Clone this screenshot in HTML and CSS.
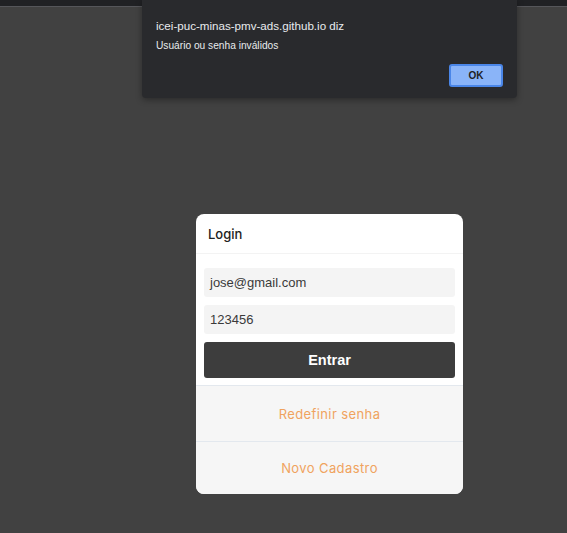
FILE: index.html
```html
<!DOCTYPE html>
<html lang="pt-BR">
<head>
<meta charset="utf-8">
<title>Login</title>
<link rel="stylesheet" href="styles.css">
</head>
<body>
<div class="topbar"></div>
<main class="stage">
  <section class="modal">
    <header class="modal-header">Login</header>
    <div class="modal-body">
      <div class="field">jose@gmail.com</div>
      <div class="field">123456</div>
      <button class="btn-enter">Entrar</button>
    </div>
    <div class="modal-footer">
      <a class="footer-link">Redefinir senha</a>
      <a class="footer-link">Novo Cadastro</a>
    </div>
  </section>
</main>
<div class="alert">
  <div class="alert-title">icei-puc-minas-pmv-ads.github.io diz</div>
  <div class="alert-msg">Usuário ou senha inválidos</div>
  <div class="alert-actions"><button class="alert-ok">OK</button></div>
</div>
</body>
</html>
```
FILE: styles.css
```css
* { box-sizing: border-box; }
html, body { margin: 0; padding: 0; }
body {
  background: #414141;
  width: 567px;
  height: 533px;
  overflow: hidden;
  font-family: "Liberation Sans", Arial, sans-serif;
  position: relative;
}
.topbar {
  height: 7px;
  background: #202124;
  border-bottom: 1px solid #55565a;
}
.stage {
  padding: 207px 0 0 196px;
}
.modal {
  width: 267px;
  height: 280px;
  background: #fff;
  border-radius: 8px;
  overflow: hidden;
  display: flex;
  flex-direction: column;
}
.modal-header {
  height: 40px;
  padding: 12px 12px 0;
  font-family: "Inter", "Lato", sans-serif;
  font-weight: 500;
  font-size: 13px;
  color: #222;
  border-bottom: 1px solid #f3f3f3;
}
.modal-body {
  padding: 14px 8px 7px;
  display: flex;
  flex-direction: column;
  gap: 8px;
}
.field {
  height: 29px;
  background: #f4f4f4;
  border-radius: 3px;
  padding: 0 6px;
  display: flex;
  align-items: center;
  font-size: 13px;
  color: #3a3a3a;
}
.btn-enter {
  height: 36px;
  background: #3d3d3d;
  border: none;
  border-radius: 3px;
  color: #fff;
  font-family: "Liberation Sans", Arial, sans-serif;
  font-size: 14.5px;
  font-weight: 700;
  padding: 0;
}
.modal-footer {
  flex: 1;
  display: flex;
  flex-direction: column;
  background: #f6f6f6;
}
.footer-link {
  flex: 1;
  display: flex;
  align-items: center;
  justify-content: center;
  padding-top: 2px;
  border-top: 1px solid #e3e8ee;
  color: #f0a35e;
  font-family: "Inter", "Lato", sans-serif;
  font-size: 13px;
  letter-spacing: 0.4px;
}
.footer-link + .footer-link { padding-top: 0; }
.alert {
  position: absolute;
  left: 142px;
  top: 0;
  width: 375px;
  height: 98px;
  background: #292a2d;
  border-radius: 0 0 4px 4px;
  box-shadow: 0 2px 6px rgba(0,0,0,0.35);
  padding: 17px 14px 0;
  color: #e8eaed;
}
.alert-title {
  font-family: "Liberation Sans", Arial, sans-serif;
  font-size: 11.6px;
  line-height: 17px;
}
.alert-msg {
  margin-top: 4px;
  font-family: "Liberation Sans", Arial, sans-serif;
  font-size: 10.2px;
  line-height: 15px;
}
.alert-actions {
  display: flex;
  justify-content: flex-end;
  margin-top: 11px;
}
.alert-ok {
  width: 54px;
  height: 23px;
  background: #8ab4f8;
  border: 2px solid #4a86e8;
  border-radius: 3px;
  color: #202124;
  font-family: "Liberation Sans", Arial, sans-serif;
  font-size: 10px;
  font-weight: 700;
  padding: 0;
}
```
